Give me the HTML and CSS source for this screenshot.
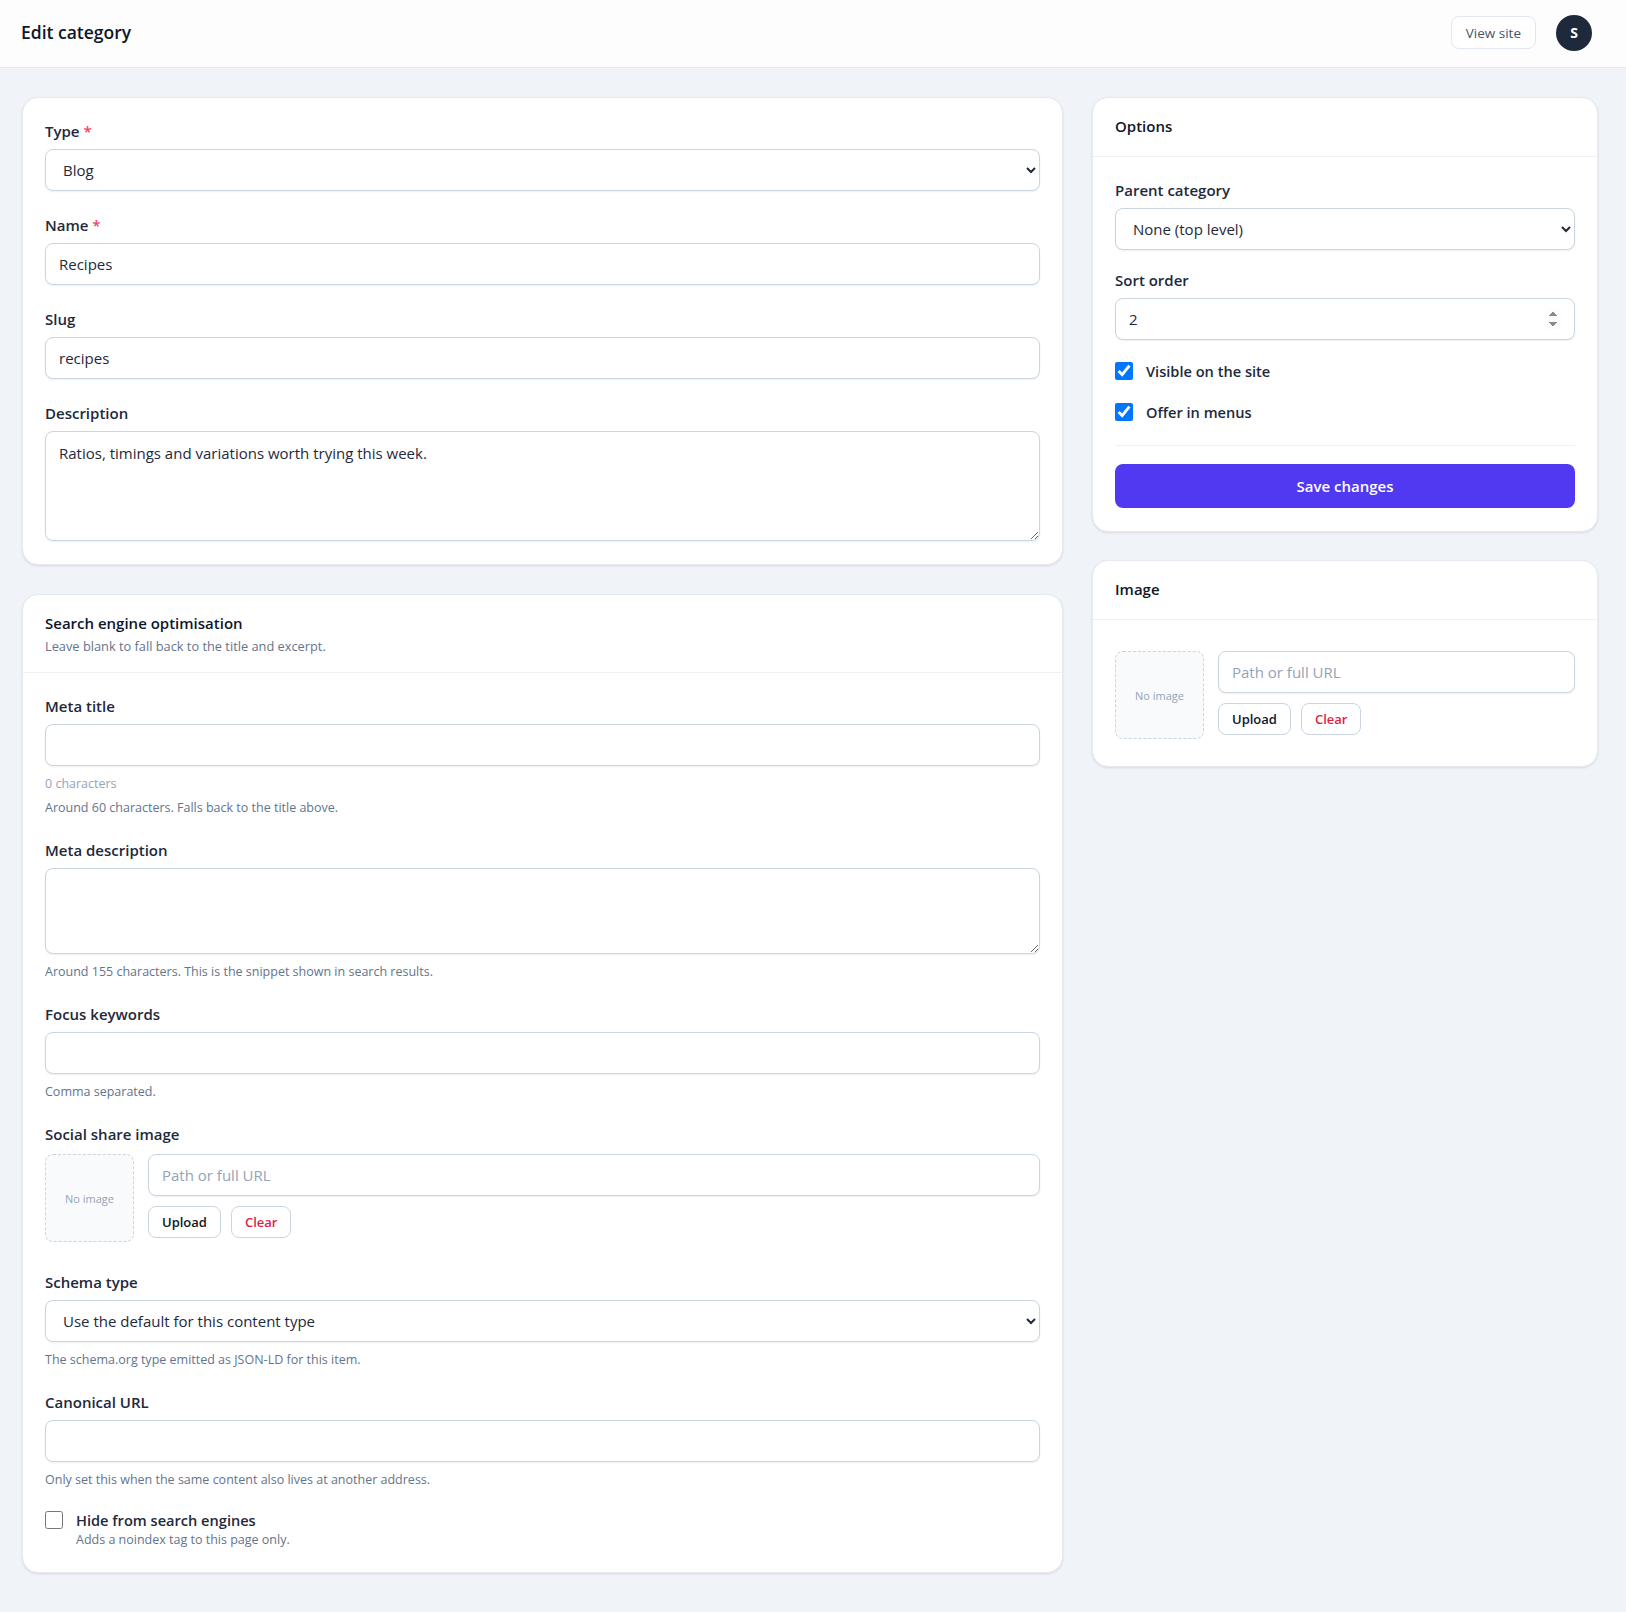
FILE: index.html
```html
<!DOCTYPE html>
<html lang="en">
<head>
<meta charset="utf-8">
<title>Edit category</title>
<link rel="stylesheet" href="styles.css">
</head>
<body>
<header class="topbar">
  <h1 class="topbar-title">Edit category</h1>
  <div class="topbar-actions">
    <a class="btn-outline" href="#">View site</a>
    <span class="avatar">S</span>
  </div>
</header>
<main class="layout">
  <div class="col-main">
    <section class="card card-padded">
      <div class="field">
        <label class="label" for="type">Type <span class="req">*</span></label>
        <select id="type" class="control"><option>Blog</option></select>
      </div>
      <div class="field">
        <label class="label" for="name">Name <span class="req">*</span></label>
        <input id="name" class="control" type="text" value="Recipes">
      </div>
      <div class="field">
        <label class="label" for="slug">Slug</label>
        <input id="slug" class="control" type="text" value="recipes">
      </div>
      <div class="field">
        <label class="label" for="desc">Description</label>
        <textarea id="desc" class="control textarea-lg">Ratios, timings and variations worth trying this week.</textarea>
      </div>
    </section>

    <section class="card">
      <div class="card-head with-sub">
        <h2 class="card-title">Search engine optimisation</h2>
        <p class="card-sub">Leave blank to fall back to the title and excerpt.</p>
      </div>
      <div class="card-body">
        <div class="field">
          <label class="label" for="mtitle">Meta title</label>
          <input id="mtitle" class="control" type="text">
          <p class="hint count">0 characters</p>
          <p class="hint">Around 60 characters. Falls back to the title above.</p>
        </div>
        <div class="field">
          <label class="label" for="mdesc">Meta description</label>
          <textarea id="mdesc" class="control textarea-sm"></textarea>
          <p class="hint">Around 155 characters. This is the snippet shown in search results.</p>
        </div>
        <div class="field">
          <label class="label" for="kw">Focus keywords</label>
          <input id="kw" class="control" type="text">
          <p class="hint">Comma separated.</p>
        </div>
        <div class="field">
          <span class="label">Social share image</span>
          <div class="imgpick">
            <div class="thumb">No image</div>
            <div class="imgpick-ctrls">
              <input class="control" type="text" placeholder="Path or full URL">
              <div class="btn-row">
                <button class="btn-sm" type="button">Upload</button>
                <button class="btn-sm btn-danger" type="button">Clear</button>
              </div>
            </div>
          </div>
        </div>
        <div class="field">
          <label class="label" for="schema">Schema type</label>
          <select id="schema" class="control"><option>Use the default for this content type</option></select>
          <p class="hint">The schema.org type emitted as JSON-LD for this item.</p>
        </div>
        <div class="field">
          <label class="label" for="canon">Canonical URL</label>
          <input id="canon" class="control" type="text">
          <p class="hint">Only set this when the same content also lives at another address.</p>
        </div>
        <label class="check-field">
          <input type="checkbox" class="checkbox">
          <span class="check-text">Hide from search engines</span>
          <span class="hint check-hint">Adds a noindex tag to this page only.</span>
        </label>
      </div>
    </section>
  </div>

  <aside class="col-side">
    <section class="card">
      <div class="card-head">
        <h2 class="card-title">Options</h2>
      </div>
      <div class="card-body card-body-tight">
        <div class="field">
          <label class="label" for="parent">Parent category</label>
          <select id="parent" class="control"><option>None (top level)</option></select>
        </div>
        <div class="field">
          <label class="label" for="sort">Sort order</label>
          <input id="sort" class="control" type="number" value="2">
        </div>
        <label class="check"><input type="checkbox" class="checkbox" checked><span>Visible on the site</span></label>
        <label class="check"><input type="checkbox" class="checkbox" checked><span>Offer in menus</span></label>
        <div class="card-actions">
          <button class="btn-primary" type="button">Save changes</button>
        </div>
      </div>
    </section>

    <section class="card">
      <div class="card-head">
        <h2 class="card-title">Image</h2>
      </div>
      <div class="card-body image-body">
        <div class="imgpick">
          <div class="thumb">No image</div>
          <div class="imgpick-ctrls">
            <input class="control" type="text" placeholder="Path or full URL">
            <div class="btn-row">
              <button class="btn-sm" type="button">Upload</button>
              <button class="btn-sm btn-danger" type="button">Clear</button>
            </div>
          </div>
        </div>
      </div>
    </section>
  </aside>
</main>
</body>
</html>
```

FILE: styles.css
```css
* { box-sizing: border-box; }

html, body { margin: 0; }

body {
  font-family: "Open Sans", "Noto Sans", sans-serif;
  font-size: 15px;
  color: #1e293b;
  background: #f0f3f8;
  min-height: 100vh;
}

/* Top bar */
.topbar {
  height: 68px;
  display: flex;
  align-items: center;
  justify-content: space-between;
  padding: 0 34px 2px 21px;
  background: #fdfdfe;
  border-bottom: 1px solid #e2e8f0;
}
.topbar-title {
  margin: 0 0 2px;
  font-size: 17.5px;
  font-weight: 600;
  color: #0f172a;
}
.topbar-actions {
  display: flex;
  align-items: center;
  gap: 20px;
}
.btn-outline {
  height: 33px;
  padding: 0 14px;
  display: inline-flex;
  align-items: center;
  border: 1px solid #e2e8f0;
  border-radius: 8px;
  background: #fff;
  color: #475569;
  font-size: 13.5px;
  font-weight: 500;
  text-decoration: none;
}
.avatar {
  width: 36px;
  height: 36px;
  border-radius: 50%;
  background: #1e293b;
  color: #fff;
  display: grid;
  place-items: center;
  font-size: 14px;
  font-weight: 700;
}

/* Layout */
.layout {
  display: grid;
  grid-template-columns: minmax(0, 1fr) 506px;
  column-gap: 29px;
  align-items: start;
  padding: 29px 28px 40px 22px;
}
.col-main {
  display: flex;
  flex-direction: column;
  gap: 29px;
}
.col-side {
  display: flex;
  flex-direction: column;
  gap: 28px;
}

/* Cards */
.card {
  background: #fff;
  border: 1px solid #e5e9f0;
  border-radius: 16px;
  box-shadow: 0 1px 3px rgba(15, 23, 42, 0.07), 0 1px 2px rgba(15, 23, 42, 0.04);
}
.card-padded {
  padding: 23px 22px;
  display: flex;
  flex-direction: column;
  gap: 24px;
}
.card-head {
  padding: 17px 22px 19px;
  border-bottom: 1px solid #eef1f5;
}
.card-head.with-sub { padding-bottom: 16px; }
.card-title {
  margin: 0;
  font-size: 15px;
  font-weight: 600;
  line-height: 22px;
  color: #0f172a;
}
.card-sub {
  margin: 2px 0 0;
  font-size: 12.8px;
  line-height: 20px;
  color: #64748b;
}
.card-body {
  padding: 23px 22px;
  display: flex;
  flex-direction: column;
  gap: 24px;
}
.card-body-tight { gap: 20px; }

/* Fields */
.field {
  display: flex;
  flex-direction: column;
}
.label {
  font-size: 15px;
  font-weight: 600;
  line-height: 20px;
  margin-bottom: 8px;
  color: #1e293b;
}
.req { color: #f43f5e; }

.control {
  display: block;
  width: 100%;
  height: 42px;
  padding: 10px 13px;
  border: 1px solid #cbd5e1;
  border-radius: 8px;
  background: #fff;
  font-family: inherit;
  font-size: 15px;
  line-height: 20px;
  color: #1e293b;
  box-shadow: 0 1px 2px rgba(15, 23, 42, 0.07);
  margin: 0;
}
select.control { padding-top: 0; padding-bottom: 0; }
.control::placeholder { color: #94a3b8; }
input[type="number"]::-webkit-inner-spin-button { opacity: 1; }
textarea.control { resize: vertical; padding-top: 11px; }
.textarea-lg { height: 110px; }
.textarea-sm { height: 86px; }

.hint {
  margin: 10px 0 0;
  font-size: 12.5px;
  line-height: 16px;
  color: #64748b;
}
.count { color: #94a3b8; line-height: 15px; }
.count + .hint { margin-top: 9px; }

/* Image picker */
.imgpick {
  display: flex;
  align-items: flex-start;
  gap: 14px;
  padding: 2px 0 6px;
}
.thumb {
  width: 89px;
  height: 88px;
  flex: none;
  border: 1px dashed #cbd5e1;
  border-radius: 8px;
  background: #f8fafc;
  display: grid;
  place-items: center;
  font-size: 11px;
  color: #94a3b8;
}
.image-body { padding-top: 31px; }
.image-body .imgpick { padding: 0 0 4px; }
.imgpick-ctrls {
  flex: 1;
  min-width: 0;
  display: flex;
  flex-direction: column;
  gap: 10px;
}
.btn-row {
  display: flex;
  gap: 10px;
}
.btn-sm {
  height: 32px;
  padding: 0 13px;
  border: 1px solid #cbd5e1;
  border-radius: 8px;
  background: #fff;
  font-family: inherit;
  font-size: 13px;
  font-weight: 600;
  color: #0f172a;
}
.btn-danger { color: #e11d48; }

/* Checkboxes */
.checkbox {
  width: 18px;
  height: 18px;
  margin: 0;
}
.check {
  display: flex;
  align-items: center;
  gap: 13px;
  height: 21px;
  font-size: 14.6px;
  font-weight: 600;
  color: #1e293b;
}
.check-field {
  display: grid;
  grid-template-columns: 18px 1fr;
  column-gap: 13px;
  align-items: center;
  margin-top: -3px;
}
.check-text {
  font-size: 14.6px;
  font-weight: 600;
  line-height: 22px;
  color: #1e293b;
}
.check-hint {
  grid-column: 2;
  margin: 0;
  line-height: 18px;
}

/* Actions */
.card-actions {
  margin-top: 3px;
  padding-top: 18px;
  border-top: 1px solid #eef1f5;
}
.btn-primary {
  display: block;
  width: 100%;
  height: 44px;
  border: 0;
  border-radius: 8px;
  background: #5139f1;
  color: #fff;
  font-family: inherit;
  font-size: 15px;
  font-weight: 600;
}
```
